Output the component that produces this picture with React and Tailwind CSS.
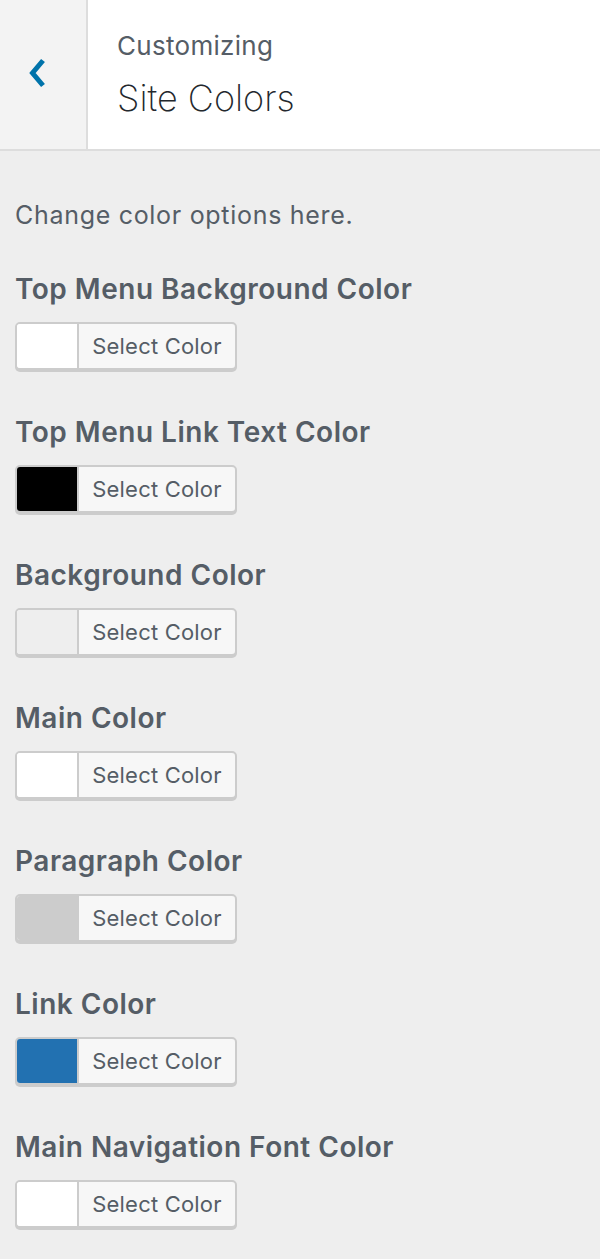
import React from "react";

const items = [
  { label: "Top Menu Background Color", color: "#ffffff" },
  { label: "Top Menu Link Text Color", color: "#000000" },
  { label: "Background Color", color: "#eeeeee" },
  { label: "Main Color", color: "#ffffff" },
  { label: "Paragraph Color", color: "#cccccc" },
  { label: "Link Color", color: "#2271b1" },
  { label: "Main Navigation Font Color", color: "#ffffff" },
];

function ColorControl({ label, color }) {
  return (
    <div className="mb-[44px]">
      <div className="text-[28px] leading-[36px] tracking-[0.5px] font-semibold text-[#555d66]">{label}</div>
      <div className="mt-[15px] flex h-[48px] w-[222px] rounded-[5px] border-2 border-[#cccccc] bg-[#f7f7f7] shadow-[0_2px_0_#cccccc] overflow-hidden">
        <div className="w-[62px] h-full border-r-2 border-[#cccccc]" style={{ backgroundColor: color }} />
        <div className="flex-1 flex items-center justify-center text-[22px] tracking-[0.2px] text-[#555d66]">Select Color</div>
      </div>
    </div>
  );
}

export default function App() {
  return (
    <div className="min-h-[1259px] bg-[#eeeeee]" style={{ fontFamily: "Inter, 'Noto Sans', sans-serif" }}>
      <div className="flex h-[151px] bg-white border-b-2 border-[#dddddd]">
        <div className="w-[88px] bg-[#f3f3f3] border-r-2 border-[#dddddd] flex items-center pl-[27px]">
          <svg width="20" height="30" viewBox="0 0 20 30" className="mt-[-3px]">
            <path d="M16 2.5 L5.5 15 L16 27.5" fill="none" stroke="#0073aa" strokeWidth="5" strokeLinejoin="miter" />
          </svg>
        </div>
        <div className="pl-[29px] pt-[28px]">
          <div className="text-[26px] leading-[36px] tracking-[0.3px] text-[#555d66]">Customizing</div>
          <div className="text-[36px] leading-[50px] mt-[9px] font-extralight text-[#23282d]">Site Colors</div>
        </div>
      </div>
      <div className="px-[15px] pt-[46px]">
        <div className="text-[25px] leading-[36px] tracking-[0.7px] text-[#555d66] mb-[38px]">Change color options here.</div>
        {items.map((it) => (
          <ColorControl key={it.label} {...it} />
        ))}
      </div>
    </div>
  );
}
